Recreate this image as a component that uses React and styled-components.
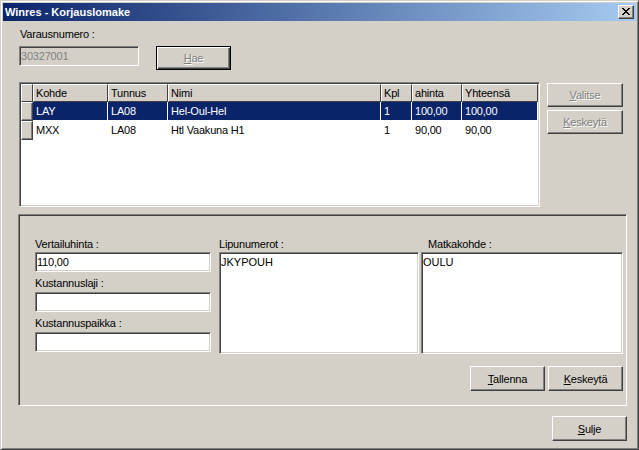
import React from "react";
import styled, { createGlobalStyle, css } from "styled-components";

const GlobalStyle = createGlobalStyle`
  html, body {
    margin: 0;
    padding: 0;
    background: #d4d0c8;
  }
  body {
    font-family: "Liberation Sans", Arial, sans-serif;
    font-size: 11px;
  }
  * {
    box-sizing: border-box;
  }
`;

// win2000 3d edges
const sunken = css`
  border: 1px solid;
  border-color: #808080 #fff #fff #808080;
  padding: 1px;
  box-shadow: inset 1px 1px #404040, inset -1px -1px #d4d0c8;
`;
const raised = css`
  border: 1px solid;
  border-color: #fff #404040 #404040 #fff;
  box-shadow: inset -1px -1px #808080;
`;

const columns = [
  { key: "kohde", label: "Kohde", w: 75 },
  { key: "tunnus", label: "Tunnus", w: 60 },
  { key: "nimi", label: "Nimi", w: 213 },
  { key: "kpl", label: "Kpl", w: 31 },
  { key: "ahinta", label: "ahinta", w: 50 },
  { key: "yht", label: "Yhteensä", w: 76 },
];

const rows = [
  { kohde: "LAY", tunnus: "LA08", nimi: "Hel-Oul-Hel", kpl: "1", ahinta: "100,00", yht: "100,00", selected: true },
  { kohde: "MXX", tunnus: "LA08", nimi: "Htl Vaakuna H1", kpl: "1", ahinta: "90,00", yht: "90,00" },
];

const App = () => {
  return (
    <>
      <GlobalStyle />
      <Window>
        <TitleBar>
          <Title>Winres - Korjauslomake</Title>
          <CloseButton>
            <svg width="8" height="7" viewBox="0 0 8 7" shapeRendering="crispEdges">
              <path
                fill="#000"
                d="M0 0h2v1H0zM6 0h2v1H6zM1 1h2v1H1zM5 1h2v1H5zM2 2h4v1H2zM3 3h2v1H3zM2 4h4v1H2zM1 5h2v1H1zM5 5h2v1H5zM0 6h2v1H0zM6 6h2v1H6z"
              />
            </svg>
          </CloseButton>
        </TitleBar>

        <Client>
          <Label $pl={1}>Varausnumero :</Label>
          <SearchRow>
            <Input $w={120} disabled value="30327001" readOnly />
            <Button $default $w={75} $h={24} $ml={17} disabled>
              <Key>H</Key>ae
            </Button>
          </SearchRow>

          <GridRow>
            <Grid>
              <HeadRow>
                <HeadCell $w={12} />
                {columns.map((c) => (
                  <HeadCell key={c.key} $w={c.w}>
                    {c.label}
                  </HeadCell>
                ))}
              </HeadRow>
              {rows.map((r, i) => (
                <DataRow key={i} $sel={r.selected}>
                  <RowMarker />
                  {columns.map((c) => (
                    <DataCell key={c.key} $w={c.w}>
                      {r[c.key]}
                    </DataCell>
                  ))}
                </DataRow>
              ))}
            </Grid>
            <SideButtons>
              <Button $w={76} $h={24} disabled>
                <Key>V</Key>alitse
              </Button>
              <Button $w={76} $h={24} disabled>
                <Key>K</Key>eskeytä
              </Button>
            </SideButtons>
          </GridRow>

          <GroupBox>
            <Columns>
              <Column $w={176}>
                <Label>Vertailuhinta :</Label>
                <Input $mt={1} value="110,00" readOnly />
                <Label $mt={5}>Kustannuslaji :</Label>
                <Input $mt={2} value="" readOnly />
                <Label $mt={5}>Kustannuspaikka :</Label>
                <Input $mt={2} value="" readOnly />
              </Column>
              <Column $w={200} $ml={8}>
                <Label>Lipunumerot :</Label>
                <TextArea value="JKYPOUH" readOnly />
              </Column>
              <Column $w={202} $ml={2}>
                <Label $pl={7}>Matkakohde :</Label>
                <TextArea value="OULU" readOnly />
              </Column>
            </Columns>
            <ButtonRow>
              <Button $w={75} $h={25}>
                <Key>T</Key>allenna
              </Button>
              <Button $w={75} $h={25}>
                <Key>K</Key>eskeytä
              </Button>
            </ButtonRow>
          </GroupBox>

          <Footer>
            <Button $w={75} $h={25}>
              <Key>S</Key>ulje
            </Button>
          </Footer>
        </Client>
      </Window>
    </>
  );
};
export default App;

const Window = styled.div`
  width: 639px;
  height: 450px;
  background: #d4d0c8;
  border: 1px solid;
  border-color: #d4d0c8 #404040 #404040 #d4d0c8;
  box-shadow: inset 1px 1px #fff, inset -1px -1px #808080;
  padding: 2px;
  display: flex;
  flex-direction: column;
`;

const TitleBar = styled.div`
  height: 18px;
  flex-shrink: 0;
  display: flex;
  align-items: center;
  justify-content: space-between;
  padding: 0 2px 0 2px;
  background: linear-gradient(to right, #0a246a, #a6caf0);
`;

const Title = styled.div`
  color: #fff;
  font-weight: bold;
  font-size: 11px;
  line-height: 13px;
  white-space: nowrap;
`;

const CloseButton = styled.div`
  width: 16px;
  height: 14px;
  background: #d4d0c8;
  ${raised};
  display: flex;
  align-items: center;
  justify-content: center;
  padding-right: 1px;
  padding-bottom: 1px;
`;

const Client = styled.div`
  flex: 1;
  display: flex;
  flex-direction: column;
  padding: 7px 9px 0 16px;
`;

const Label = styled.div`
  line-height: 13px;
  height: 13px;
  color: #000;
  white-space: nowrap;
  letter-spacing: -0.2px;
  padding-left: ${(p) => p.$pl || 0}px;
  margin-top: ${(p) => p.$mt || 0}px;
`;

const Key = styled.span`
  text-decoration: underline;
`;

const Input = styled.input`
  display: block;
  width: ${(p) => (p.$w ? `${p.$w}px` : "100%")};
  height: 20px;
  margin: ${(p) => p.$mt || 0}px 0 0 0;
  ${sunken};
  padding: 0 1px;
  background: ${(p) => (p.disabled ? "#d4d0c8" : "#fff")};
  color: ${(p) => (p.disabled ? "#808080" : "#000")};
  font: 11px "Liberation Sans", Arial, sans-serif;
  letter-spacing: -0.2px;
  outline: none;
`;

const TextArea = styled.textarea`
  display: block;
  width: 100%;
  height: 102px;
  margin-top: 1px;
  ${sunken};
  padding: 3px 1px 1px 1px;
  background: #fff;
  color: #000;
  font: 11px "Liberation Sans", Arial, sans-serif;
  line-height: 13px;
  resize: none;
  outline: none;
  overflow: hidden;
`;

const Button = styled.button`
  width: ${(p) => p.$w}px;
  height: ${(p) => p.$h}px;
  margin-left: ${(p) => p.$ml || 0}px;
  padding: 0;
  background: #d4d0c8;
  font: 11px "Liberation Sans", Arial, sans-serif;
  letter-spacing: -0.2px;
  color: ${(p) => (p.disabled ? "#808080" : "#000")};
  text-shadow: ${(p) => (p.disabled ? "1px 1px #fff" : "none")};
  ${(p) =>
    p.$default
      ? css`
          border: 1px solid #000;
          box-shadow: inset 1px 1px #fff, inset -1px -1px #404040,
            inset -2px -2px #808080;
        `
      : raised};
`;

const SearchRow = styled.div`
  display: flex;
  align-items: flex-start;
  margin-top: 5px;
`;

const GridRow = styled.div`
  display: flex;
  align-items: flex-start;
  margin-top: 12px;
`;

const Grid = styled.div`
  width: 521px;
  height: 125px;
  ${sunken};
  background: #fff;
  overflow: hidden;
`;

const HeadRow = styled.div`
  display: flex;
  height: 18px;
`;

const HeadCell = styled.div`
  width: ${(p) => p.$w}px;
  height: 18px;
  flex-shrink: 0;
  background: #d4d0c8;
  border-top: 1px solid #fff;
  border-left: 1px solid #fff;
  border-right: 1px solid #404040;
  border-bottom: 1px solid #404040;
  padding-left: 2px;
  line-height: 16px;
  letter-spacing: -0.2px;
  white-space: nowrap;
  overflow: hidden;
`;

const DataRow = styled.div`
  display: flex;
  height: 19px;
  background: ${(p) => (p.$sel ? "#0a246a" : "#fff")};
  color: ${(p) => (p.$sel ? "#fff" : "#000")};
`;

const RowMarker = styled.div`
  width: 12px;
  height: 19px;
  flex-shrink: 0;
  background: #d4d0c8;
  ${raised};
`;

const DataCell = styled.div`
  width: ${(p) => p.$w}px;
  flex-shrink: 0;
  height: 19px;
  border-right: 1px solid #fff;
  border-bottom: 1px solid #fff;
  padding-left: 3px;
  line-height: 18px;
  letter-spacing: -0.2px;
  white-space: nowrap;
  overflow: hidden;
`;

const SideButtons = styled.div`
  display: flex;
  flex-direction: column;
  gap: 3px;
  margin: 1px 0 0 7px;
`;

const GroupBox = styled.div`
  width: 609px;
  height: 192px;
  margin: 7px 0 0 -1px;
  ${sunken};
  padding: 23px 3px 0 16px;
  display: flex;
  flex-direction: column;
`;

const Columns = styled.div`
  display: flex;
  align-items: flex-start;
`;

const Column = styled.div`
  width: ${(p) => p.$w}px;
  margin-left: ${(p) => p.$ml || 0}px;
  display: flex;
  flex-direction: column;
`;

const ButtonRow = styled.div`
  display: flex;
  justify-content: flex-end;
  gap: 3px;
  margin-top: 12px;
`;

const Footer = styled.div`
  display: flex;
  justify-content: flex-end;
  margin-top: 10px;
`;
